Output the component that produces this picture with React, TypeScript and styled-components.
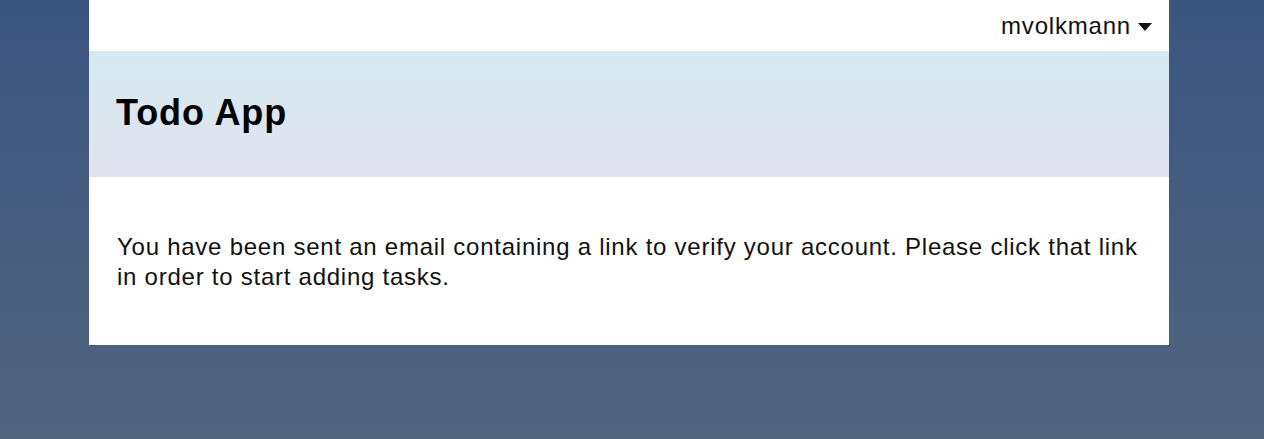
import React, { FC } from "react";
import styled, { createGlobalStyle } from "styled-components";

const GlobalStyle = createGlobalStyle`
  html, body {
    margin: 0;
    padding: 0;
    height: 100%;
  }
  body {
    font-family: "Liberation Sans", Arial, sans-serif;
    background: linear-gradient(to bottom, #3a5580 0%, #52657f 100%);
    min-height: 439px;
  }
`;

const Page = styled.div`
  display: flex;
  justify-content: center;
  padding-right: 6px;
  min-height: 439px;
`;

const Card = styled.div`
  width: 1080px;
  align-self: flex-start;
  background-color: white;
  display: flex;
  flex-direction: column;
`;

const TopBar = styled.div`
  height: 51px;
  display: flex;
  align-items: center;
  justify-content: flex-end;
  padding-right: 17px;
  box-sizing: border-box;
`;

const UserMenu = styled.div`
  display: flex;
  align-items: center;
  gap: 7px;
  font-size: 24px;
  letter-spacing: 0.8px;
  color: #111;
  cursor: pointer;
`;

const Caret = styled.span`
  width: 0;
  height: 0;
  border-left: 7.5px solid transparent;
  border-right: 7.5px solid transparent;
  border-top: 8px solid #111;
  margin-top: 2px;
`;

const Header = styled.header`
  height: 126px;
  display: flex;
  align-items: center;
  padding-left: 27px;
  background: linear-gradient(to bottom, #d5eaf1 0%, #e1e3ef 100%);
`;

const Title = styled.h1`
  margin: 0 0 2px 0;
  font-size: 36px;
  letter-spacing: 0.9px;
  font-weight: bold;
  color: black;
`;

const Content = styled.main`
  padding: 55px 16px 53px 28px;
`;

const Message = styled.p`
  margin: 0;
  font-size: 24px;
  line-height: 30px;
  letter-spacing: 0.75px;
  color: #111;
`;

const App: FC = () => {
  return (
    <>
      <GlobalStyle />
      <Page>
        <Card>
          <TopBar>
            <UserMenu>
              mvolkmann
              <Caret />
            </UserMenu>
          </TopBar>
          <Header>
            <Title>Todo App</Title>
          </Header>
          <Content>
            <Message>
              You have been sent an email containing a link to verify your
              account. Please click that link in order to start adding tasks.
            </Message>
          </Content>
        </Card>
      </Page>
    </>
  );
};

export default App;
